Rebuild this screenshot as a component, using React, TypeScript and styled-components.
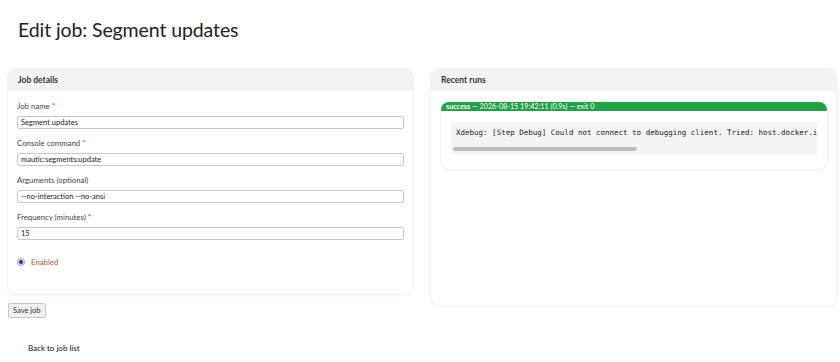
import styled, {createGlobalStyle} from 'styled-components'

const GlobalStyle = createGlobalStyle`
  html, body {
    margin: 0;
    padding: 0;
    background: #fff;
  }
  body {
    font-family: Lato, "Noto Sans", sans-serif;
    color: #222;
  }
`

const Page = styled.div`
  padding: 0 8px;
  width: 840px;
  box-sizing: border-box;
`

const Title = styled.h1`
  margin: 17px 0 0 10px;
  font-size: 19.5px;
  font-weight: 400;
  line-height: 26px;
  color: #222;
  letter-spacing: -0.1px;
`

const Columns = styled.div`
  display: grid;
  grid-template-columns: 405px 405px;
  gap: 18px;
  align-items: start;
  margin-top: 26px;
`

const Card = styled.section<{$minHeight?: number}>`
  background: #fff;
  border-radius: 8px;
  box-shadow: 0 0 0 1px #f1f1f1, 0 1px 3px rgba(0, 0, 0, 0.06);
  overflow: hidden;
  min-height: ${p => (p.$minHeight ? `${p.$minHeight}px` : 'auto')};
`

const CardHeader = styled.header`
  background: #f3f3f3;
  height: 22px;
  line-height: 22px;
  padding: 0 10px;
  font-size: 8.5px;
  font-weight: 700;
  color: #333;
`

const CardBody = styled.div<{$pad: string}>`
  padding: ${p => p.$pad};
`

const Field = styled.div`
  display: flex;
  flex-direction: column;
  gap: 4px;
  margin-bottom: 8px;
`

const Label = styled.label`
  font-size: 7.8px;
  line-height: 12px;
  color: #444;

  span {
    color: #d04040;
  }
`

const Input = styled.input`
  box-sizing: border-box;
  width: 100%;
  height: 13px;
  padding: 0 3px;
  border: 1px solid #c9c9c9;
  border-radius: 2px;
  font-family: Lato, "Noto Sans", sans-serif;
  font-size: 7.5px;
  color: #222;
  background: #fff;
  outline: none;
`

const RadioRow = styled.label`
  display: flex;
  align-items: center;
  gap: 6px;
  margin-top: 17px;
  font-size: 7.8px;
  color: #b94a48;
`

const RadioDot = styled.span`
  box-sizing: border-box;
  width: 8px;
  height: 8px;
  border-radius: 50%;
  border: 1px solid #9aa4c4;
  background: #e8ebf6;
  display: flex;
  align-items: center;
  justify-content: center;

  &::after {
    content: '';
    width: 4px;
    height: 4px;
    border-radius: 50%;
    background: #2c3677;
  }
`

const SaveButton = styled.button`
  margin-top: 9px;
  height: 15px;
  padding: 0 4px;
  border: 1px solid #c6c6c6;
  border-radius: 2px;
  background: #efefef;
  font-family: Lato, "Noto Sans", sans-serif;
  font-size: 7.5px;
  color: #333;
  line-height: 13px;
`

const BackLink = styled.a`
  display: block;
  margin: 25px 0 0 20px;
  font-size: 8px;
  color: #111;
  text-decoration: none;
`

const Run = styled.div`
  border-radius: 8px;
  box-shadow: 0 0 0 1px #f0f0f0, 0 1px 3px rgba(0, 0, 0, 0.05);
  overflow: hidden;
`

const RunHeader = styled.div`
  background: #23a047;
  height: 9px;
  line-height: 9px;
  padding: 0 5px;
  font-size: 7.2px;
  color: #fff;
  white-space: nowrap;

  b {
    font-weight: 700;
  }
`

const RunBody = styled.div`
  padding: 11px 10px 15px;
`

const OutputBox = styled.div`
  background: #f4f4f4;
  padding: 6px 0 3px;
  overflow: hidden;
`

const Output = styled.pre`
  margin: 0 0 9px;
  padding: 0 5px;
  font-family: "DejaVu Sans Mono", "Liberation Mono", monospace;
  font-size: 7.5px;
  line-height: 10px;
  color: #222;
  overflow: hidden;
  white-space: pre;
`

const ScrollThumb = styled.div`
  width: 184px;
  height: 4px;
  margin-left: 2px;
  border-radius: 2px;
  background: #bdbdbd;
`

const fields = [
  {label: 'Job name', required: true, value: 'Segment updates'},
  {label: 'Console command', required: true, value: 'mautic:segments:update'},
  {label: 'Arguments (optional)', required: false, value: '--no-interaction --no-ansi'},
  {label: 'Frequency (minutes)', required: true, value: '15'},
]

export default function App() {
  return (
    <Page>
      <GlobalStyle />
      <Title>Edit job: Segment updates</Title>
      <Columns>
        <div>
          <Card>
            <CardHeader>Job details</CardHeader>
            <CardBody $pad="9px 9px 27px">
              {fields.map(f => (
                <Field key={f.label}>
                  <Label>
                    {f.label}
                    {f.required && <span> *</span>}
                  </Label>
                  <Input defaultValue={f.value} />
                </Field>
              ))}
              <RadioRow>
                <RadioDot />
                Enabled
              </RadioRow>
            </CardBody>
          </Card>
          <SaveButton>Save job</SaveButton>
        </div>
        <Card $minHeight={237}>
          <CardHeader>Recent runs</CardHeader>
          <CardBody $pad="11px 9px 10px 10px">
            <Run>
              <RunHeader>
                <b>success</b> — 2026-08-15 19:42:11 (0.9s) — exit 0
              </RunHeader>
              <RunBody>
                <OutputBox>
                  <Output>Xdebug: [Step Debug] Could not connect to debugging client. Tried: host.docker.i</Output>
                  <ScrollThumb />
                </OutputBox>
              </RunBody>
            </Run>
          </CardBody>
        </Card>
      </Columns>
      <BackLink href="#">Back to job list</BackLink>
    </Page>
  )
}
